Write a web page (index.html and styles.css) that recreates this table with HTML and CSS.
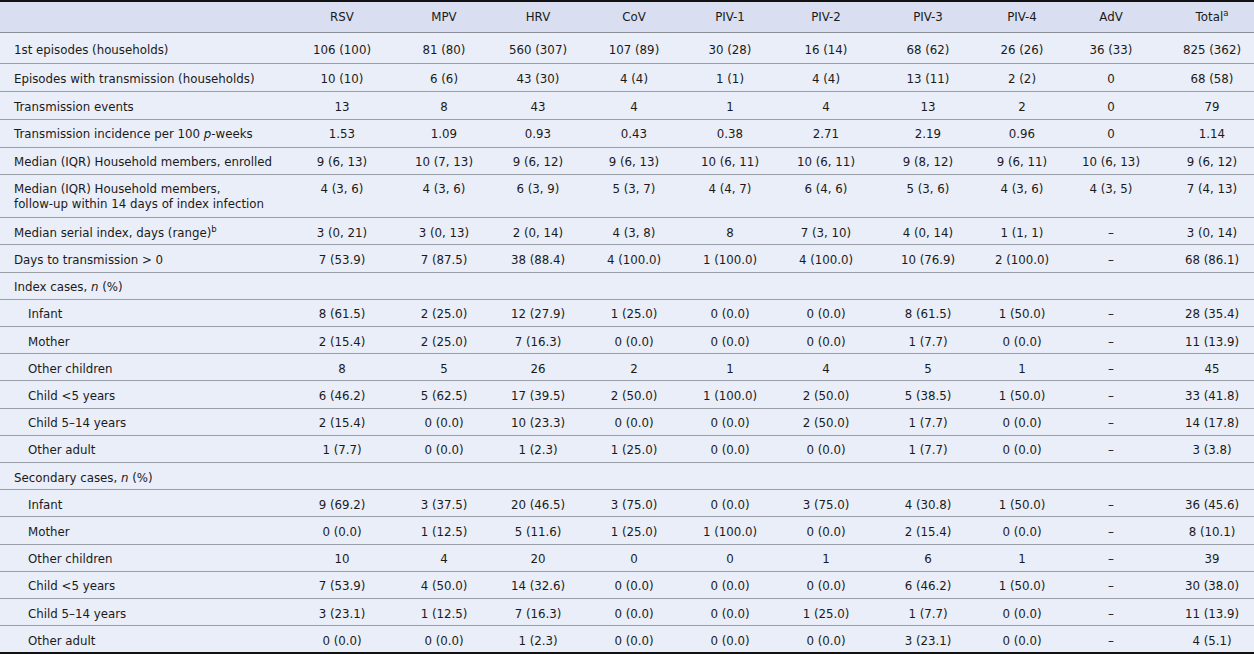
FILE: index.html
```html
<!DOCTYPE html>
<html>
<head>
<meta charset="utf-8">
<link rel="stylesheet" href="styles.css">
</head>
<body>
<table class="data">
<colgroup>
<col class="c-label"><col class="c-rsv"><col class="c-mpv"><col class="c-hrv"><col class="c-cov"><col class="c-piv1"><col class="c-piv2"><col class="c-piv3"><col class="c-piv4"><col class="c-adv"><col class="c-total">
</colgroup>
<thead>
<tr><th></th><th>RSV</th><th>MPV</th><th>HRV</th><th>CoV</th><th>PIV-1</th><th>PIV-2</th><th>PIV-3</th><th>PIV-4</th><th>AdV</th><th class="total">Total<sup>a</sup></th></tr>
</thead>
<tbody>
<tr class="first"><td>1st episodes (households)</td><td>106 (100)</td><td>81 (80)</td><td>560 (307)</td><td>107 (89)</td><td>30 (28)</td><td>16 (14)</td><td>68 (62)</td><td>26 (26)</td><td>36 (33)</td><td class="total">825 (362)</td></tr>
<tr class="upper"><td>Episodes with transmission (households)</td><td>10 (10)</td><td>6 (6)</td><td>43 (30)</td><td>4 (4)</td><td>1 (1)</td><td>4 (4)</td><td>13 (11)</td><td>2 (2)</td><td>0</td><td class="total">68 (58)</td></tr>
<tr class="upper"><td>Transmission events</td><td>13</td><td>8</td><td>43</td><td>4</td><td>1</td><td>4</td><td>13</td><td>2</td><td>0</td><td class="total">79</td></tr>
<tr class="upper"><td>Transmission incidence per 100 <i>p</i>-weeks</td><td>1.53</td><td>1.09</td><td>0.93</td><td>0.43</td><td>0.38</td><td>2.71</td><td>2.19</td><td>0.96</td><td>0</td><td class="total">1.14</td></tr>
<tr class="upper"><td>Median (IQR) Household members, enrolled</td><td>9 (6, 13)</td><td>10 (7, 13)</td><td>9 (6, 12)</td><td>9 (6, 13)</td><td>10 (6, 11)</td><td>10 (6, 11)</td><td>9 (8, 12)</td><td>9 (6, 11)</td><td>10 (6, 13)</td><td class="total">9 (6, 12)</td></tr>
<tr class="double"><td>Median (IQR) Household members,<br>follow-up within 14 days of index infection</td><td>4 (3, 6)</td><td>4 (3, 6)</td><td>6 (3, 9)</td><td>5 (3, 7)</td><td>4 (4, 7)</td><td>6 (4, 6)</td><td>5 (3, 6)</td><td>4 (3, 6)</td><td>4 (3, 5)</td><td class="total">7 (4, 13)</td></tr>
<tr><td>Median serial index, days (range)<sup>b</sup></td><td>3 (0, 21)</td><td>3 (0, 13)</td><td>2 (0, 14)</td><td>4 (3, 8)</td><td>8</td><td>7 (3, 10)</td><td>4 (0, 14)</td><td>1 (1, 1)</td><td>–</td><td class="total">3 (0, 14)</td></tr>
<tr><td>Days to transmission &gt; 0</td><td>7 (53.9)</td><td>7 (87.5)</td><td>38 (88.4)</td><td>4 (100.0)</td><td>1 (100.0)</td><td>4 (100.0)</td><td>10 (76.9)</td><td>2 (100.0)</td><td>–</td><td class="total">68 (86.1)</td></tr>
<tr><td>Index cases, <i>n</i> (%)</td><td></td><td></td><td></td><td></td><td></td><td></td><td></td><td></td><td></td><td class="total"></td></tr>
<tr class="sub"><td>Infant</td><td>8 (61.5)</td><td>2 (25.0)</td><td>12 (27.9)</td><td>1 (25.0)</td><td>0 (0.0)</td><td>0 (0.0)</td><td>8 (61.5)</td><td>1 (50.0)</td><td>–</td><td class="total">28 (35.4)</td></tr>
<tr class="sub"><td>Mother</td><td>2 (15.4)</td><td>2 (25.0)</td><td>7 (16.3)</td><td>0 (0.0)</td><td>0 (0.0)</td><td>0 (0.0)</td><td>1 (7.7)</td><td>0 (0.0)</td><td>–</td><td class="total">11 (13.9)</td></tr>
<tr class="sub"><td>Other children</td><td>8</td><td>5</td><td>26</td><td>2</td><td>1</td><td>4</td><td>5</td><td>1</td><td>–</td><td class="total">45</td></tr>
<tr class="sub"><td>Child &lt;5 years</td><td>6 (46.2)</td><td>5 (62.5)</td><td>17 (39.5)</td><td>2 (50.0)</td><td>1 (100.0)</td><td>2 (50.0)</td><td>5 (38.5)</td><td>1 (50.0)</td><td>–</td><td class="total">33 (41.8)</td></tr>
<tr class="sub"><td>Child 5–14 years</td><td>2 (15.4)</td><td>0 (0.0)</td><td>10 (23.3)</td><td>0 (0.0)</td><td>0 (0.0)</td><td>2 (50.0)</td><td>1 (7.7)</td><td>0 (0.0)</td><td>–</td><td class="total">14 (17.8)</td></tr>
<tr class="sub"><td>Other adult</td><td>1 (7.7)</td><td>0 (0.0)</td><td>1 (2.3)</td><td>1 (25.0)</td><td>0 (0.0)</td><td>0 (0.0)</td><td>1 (7.7)</td><td>0 (0.0)</td><td>–</td><td class="total">3 (3.8)</td></tr>
<tr><td>Secondary cases, <i>n</i> (%)</td><td></td><td></td><td></td><td></td><td></td><td></td><td></td><td></td><td></td><td class="total"></td></tr>
<tr class="sub"><td>Infant</td><td>9 (69.2)</td><td>3 (37.5)</td><td>20 (46.5)</td><td>3 (75.0)</td><td>0 (0.0)</td><td>3 (75.0)</td><td>4 (30.8)</td><td>1 (50.0)</td><td>–</td><td class="total">36 (45.6)</td></tr>
<tr class="sub"><td>Mother</td><td>0 (0.0)</td><td>1 (12.5)</td><td>5 (11.6)</td><td>1 (25.0)</td><td>1 (100.0)</td><td>0 (0.0)</td><td>2 (15.4)</td><td>0 (0.0)</td><td>–</td><td class="total">8 (10.1)</td></tr>
<tr class="sub"><td>Other children</td><td>10</td><td>4</td><td>20</td><td>0</td><td>0</td><td>1</td><td>6</td><td>1</td><td>–</td><td class="total">39</td></tr>
<tr class="sub"><td>Child &lt;5 years</td><td>7 (53.9)</td><td>4 (50.0)</td><td>14 (32.6)</td><td>0 (0.0)</td><td>0 (0.0)</td><td>0 (0.0)</td><td>6 (46.2)</td><td>1 (50.0)</td><td>–</td><td class="total">30 (38.0)</td></tr>
<tr class="sub"><td>Child 5–14 years</td><td>3 (23.1)</td><td>1 (12.5)</td><td>7 (16.3)</td><td>0 (0.0)</td><td>0 (0.0)</td><td>1 (25.0)</td><td>1 (7.7)</td><td>0 (0.0)</td><td>–</td><td class="total">11 (13.9)</td></tr>
<tr class="sub last"><td>Other adult</td><td>0 (0.0)</td><td>0 (0.0)</td><td>1 (2.3)</td><td>0 (0.0)</td><td>0 (0.0)</td><td>0 (0.0)</td><td>3 (23.1)</td><td>0 (0.0)</td><td>–</td><td class="total">4 (5.1)</td></tr>
</tbody>
</table>
</body>
</html>
```
FILE: styles.css
```css
html, body {
  margin: 0;
  padding: 0;
  background: #eaeef8;
}

.data {
  width: 1254px;
  table-layout: fixed;
  border-collapse: collapse;
  font-family: "DejaVu Sans", sans-serif;
  font-size: 11.8px;
  line-height: 15px;
  color: #1a1a1a;
  background: #eaeef8;
  border-top: 2px solid #111;
  border-bottom: 2px solid #111;
}

.c-label { width: 290px; }
.c-rsv { width: 104px; }
.c-mpv { width: 100px; }
.c-hrv { width: 88px; }
.c-cov { width: 104px; }
.c-piv1 { width: 88px; }
.c-piv2 { width: 104px; }
.c-piv3 { width: 100px; }
.c-piv4 { width: 88px; }
.c-adv { width: 90px; }
.c-total { width: 98px; }

.data th {
  background: #d9dff0;
  font-weight: normal;
  text-align: center;
  padding: 7.5px 0 7.5px;
  border-bottom: 1px solid #8a8e96;
}

.data td {
  text-align: center;
  vertical-align: top;
  padding: 7.6px 0 3.6px;
  border-bottom: 1px solid #9a9ea6;
  white-space: nowrap;
}

.data td:first-child {
  text-align: left;
  padding-left: 14px;
}

.data .sub td:first-child {
  padding-left: 28px;
}

.data .first td {
  padding-top: 9.8px;
  padding-bottom: 5.5px;
}

.data .upper td {
  padding-top: 7.5px;
  padding-bottom: 4.25px;
}

.data .double td {
  padding-top: 7px;
  padding-bottom: 5px;
}

.data th.total,
.data td.total {
  padding-left: 14px;
}

.data .last td {
  border-bottom: none;
}

.data sup {
  font-size: 8.5px;
  line-height: 0;
  vertical-align: 5px;
}
```
